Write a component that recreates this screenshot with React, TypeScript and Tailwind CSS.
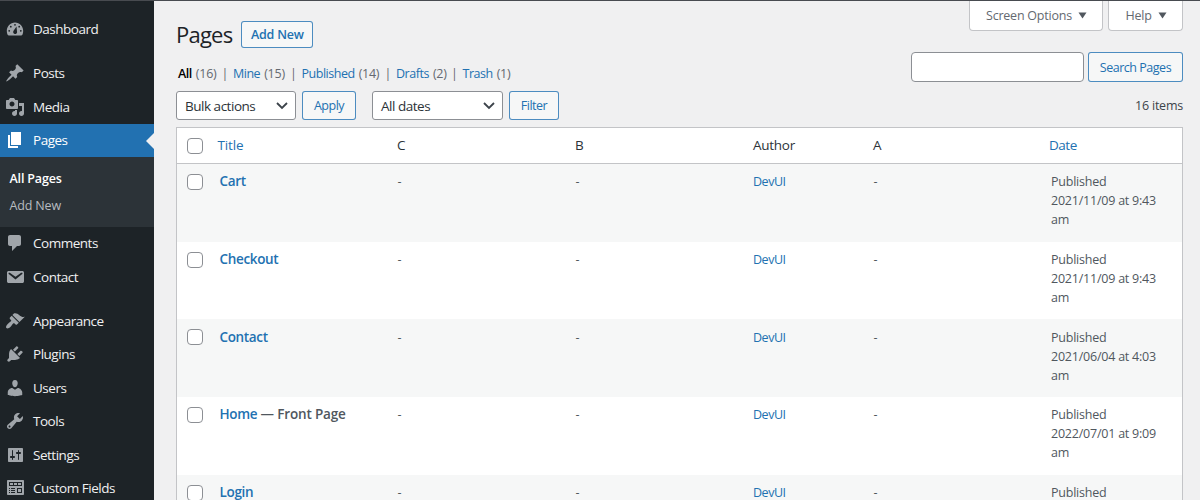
import React from "react";

const paths = {
  pin: "M10.44 3.02l1.82-1.82 6.36 6.35-1.83 1.82c-1.05-.68-2.48-.57-3.41.36l-.75.75c-.92.93-1.04 2.35-.35 3.41l-1.83 1.82-2.41-2.41-2.8 2.79c-.42.42-3.38 2.71-3.8 2.29s1.86-3.39 2.28-3.81l2.79-2.79L4.1 9.36l1.83-1.82c1.05.69 2.48.57 3.4-.36l.75-.75c.93-.92 1.05-2.35.36-3.41z",
  media:
    "M13 11V4c0-.55-.45-1-1-1h-1.67L9 1H5L3.67 3H2c-.55 0-1 .45-1 1v7c0 .55.45 1 1 1h10c.55 0 1-.45 1-1zM7 4.5c1.38 0 2.5 1.12 2.5 2.5S8.38 9.5 7 9.5 4.5 8.38 4.5 7 5.62 4.5 7 4.5zM14 6h5v10.5c0 1.38-1.12 2.5-2.5 2.5S14 17.88 14 16.5s1.12-2.5 2.5-2.5c.17 0 .34.02.5.05V9h-3V6zm-4 8.05V13h2v3.5c0 1.38-1.12 2.5-2.5 2.5S7 17.88 7 16.5 8.12 14 9.5 14c.17 0 .34.02.5.05z",
  page: "M6 15V2h10v13H6zm-1 1h8v2H3V5h2v11z",
  comment: "M5 2h9c1.1 0 2 .9 2 2v7c0 1.1-.9 2-2 2h-2l-5 5v-5H5c-1.1 0-2-.9-2-2V4c0-1.1.9-2 2-2z",
  mail: "M3.87 4h13.25C18.37 4 19 4.59 19 5.79v8.42c0 1.19-.63 1.79-1.88 1.79H3.87c-1.25 0-1.88-.6-1.88-1.79V5.79c0-1.2.63-1.79 1.88-1.79zm6.62 8.6l6.74-5.53c.24-.2.43-.66.13-1.07-.29-.41-.82-.42-1.17-.17l-5.7 3.86L4.8 5.83c-.35-.25-.88-.24-1.17.17-.3.41-.11.87.13 1.07z",
  brush:
    "M14.48 11.06L7.41 3.99l1.5-1.5c.5-.56 2.3-.47 3.51.32 1.21.8 1.43 1.28 2.91 2.1 1.18.64 2.45 1.26 4.45.85zm-.71.71L6.7 4.7 4.93 6.47c-.39.39-.39 1.02 0 1.41l1.06 1.06c.39.39.39 1.03 0 1.42-.6.6-1.43 1.11-2.21 1.69-.35.26-.7.53-1.01.84C1.43 14.23.4 16.08 1.4 17.07c.99 1 2.84-.03 4.18-1.36.31-.31.58-.66.85-1.02.57-.78 1.08-1.61 1.69-2.21.39-.39 1.02-.39 1.41 0l1.06 1.06c.39.39 1.02.39 1.41 0z",
  plug: "M13.11 4.36L9.87 7.6 8 5.73l3.24-3.24c.35-.34 1.05-.2 1.56.32.52.51.66 1.21.31 1.55zm-8 1.77l.91-1.12 9.01 9.01-1.19.84c-.71.71-2.63 1.16-3.82 1.16H6.14L4.9 17.26c-.59.59-1.54.59-2.12 0-.59-.58-.59-1.53 0-2.12l1.24-1.24v-3.88c0-1.13.4-3.19 1.09-3.89zm7.26 3.97l3.24-3.24c.34-.35 1.04-.21 1.55.31.52.51.66 1.21.31 1.55l-3.24 3.25z",
  user: "M10 9.25c-2.27 0-2.73-3.44-2.73-3.44C7 4.02 7.82 2 9.97 2c2.16 0 2.98 2.02 2.71 3.81 0 0-.41 3.44-2.68 3.44zm0 2.57L12.72 10c2.39 0 4.52 2.33 4.52 4.53v2.49s-3.65 1.13-7.24 1.13c-3.65 0-7.24-1.13-7.24-1.13v-2.49c0-2.25 1.94-4.48 4.47-4.48z",
  wrench:
    "M16.68 9.77c-1.34 1.34-3.3 1.67-4.95.99l-5.41 6.52c-.99.99-2.59.99-3.58 0s-.99-2.59 0-3.57l6.52-5.42c-.68-1.65-.35-3.61.99-4.95 1.28-1.28 3.12-1.62 4.72-1.06l-2.89 2.89 2.82 2.82 2.86-2.87c.53 1.58.18 3.39-1.08 4.65zM3.81 16.21c.4.39 1.04.39 1.43 0 .4-.4.4-1.04 0-1.43-.39-.4-1.03-.4-1.43 0-.39.39-.39 1.03 0 1.43z",
  sliders:
    "M18 16V4c0-.55-.45-1-1-1H4c-.55 0-1 .45-1 1v12c0 .55.45 1 1 1h13c.55 0 1-.45 1-1zM8 11h1c.55 0 1 .45 1 1s-.45 1-1 1H8v1.5c0 .28-.22.5-.5.5s-.5-.22-.5-.5V13H6c-.55 0-1-.45-1-1s.45-1 1-1h1V5.5c0-.28.22-.5.5-.5s.5.22.5.5V11zm5-2h-1c-.55 0-1-.45-1-1s.45-1 1-1h1V5.5c0-.28.22-.5.5-.5s.5.22.5.5V7h1c.55 0 1 .45 1 1s-.45 1-1 1h-1v5.5c0 .28-.22.5-.5.5s-.5-.22-.5-.5V9z",
  gauge:
    "M3.900 16.500c-.6 0-1-.3-1.300-.8C2.100 14.700 1.800 13.500 1.800 12.100 1.800 7.300 5.400 3.500 10 3.500s8.200 3.800 8.200 8.600c0 1.300-.3 2.500-.8 3.600-.3.500-.7.800-1.300.8zM10 4.900a.9.9 0 100 1.800.9.900 0 000-1.800zM5.800 6.800a.9.9 0 100 1.800.9.900 0 000-1.800zM14.200 6.800a.9.9 0 100 1.800.9.900 0 000-1.800zM4.200 10.900a.9.9 0 100 1.800.9.900 0 000-1.800zM15.800 10.900a.9.9 0 100 1.800.9.900 0 000-1.800zM11.500 7.500L8.400 12.100C7.700 13.600 8.600 15 10 15s2.400-1.200 2-2.600z",
  fields:
    "M19 16V3c0-.55-.45-1-1-1H3c-.55 0-1 .45-1 1v13c0 .55.45 1 1 1h15c.55 0 1-.45 1-1zM4 4h13v4H4V4zm1 1v2h3V5H5zm4 0v2h3V5H9zm4 0v2h3V5h-3zM4 10h1v1H4zM6 10h4v1H6zM12 10h5v5h-5zM4 12h1v1H4zM6 12h4v1H6zM4 14h1v1H4zM6 14h4v1H6zM13 11v3h3v-3z",
};

function MenuItem({ icon, label, active = false }: { icon: keyof typeof paths; label: string; active?: boolean }) {
  return (
    <a
      className={
        active
          ? "relative flex h-[33.5px] shrink-0 items-center bg-[#2271b1] text-white"
          : "flex h-[33.5px] shrink-0 items-center text-[#f0f0f1]"
      }
    >
      <svg
        viewBox="0 0 20 20"
        fillRule="evenodd"
        className={active ? "ml-[5px] mr-[8px] h-5 w-5 fill-white" : "ml-[5px] mr-[8px] h-5 w-5 fill-[#a0a5aa]"}
      >
        <path d={paths[icon]} />
      </svg>
      <span className="pt-[0.5px] text-[13.5px]">{label}</span>
      {active && (
        <span className="absolute right-0 top-[9px] border-y-8 border-r-8 border-y-transparent border-r-[#f0f0f1]" />
      )}
    </a>
  );
}

function Sidebar() {
  return (
    <nav className="flex w-[154px] shrink-0 flex-col overflow-hidden bg-[#1d2327] pt-[11px]">
      <MenuItem icon="gauge" label="Dashboard" />
      <div className="h-[11px] shrink-0" />
      <MenuItem icon="pin" label="Posts" />
      <MenuItem icon="media" label="Media" />
      <MenuItem icon="page" label="Pages" active />
      <div className="flex h-[69.5px] shrink-0 flex-col bg-[#2c3338] pl-[9.5px] pt-[8px] text-[12.5px] leading-[27px] tracking-[-0.013em]">
        <a className="font-semibold text-white">All Pages</a>
        <a className="text-[#b8bcc0]">Add New</a>
      </div>
      <MenuItem icon="comment" label="Comments" />
      <MenuItem icon="mail" label="Contact" />
      <div className="h-[10.5px] shrink-0" />
      <MenuItem icon="brush" label="Appearance" />
      <MenuItem icon="plug" label="Plugins" />
      <MenuItem icon="user" label="Users" />
      <MenuItem icon="wrench" label="Tools" />
      <MenuItem icon="sliders" label="Settings" />
      <MenuItem icon="fields" label="Custom Fields" />
    </nav>
  );
}

const views = [
  { label: "All", count: 16, width: "w-[55px]" },
  { label: "Mine", count: 15, width: "w-[68.5px]" },
  { label: "Published", count: 14, width: "w-[94.5px]" },
  { label: "Drafts", count: 2, width: "w-[66.5px]" },
  { label: "Trash", count: 1, width: "w-[60px]" },
];

function Button({ label, className }: { label: string; className: string }) {
  return (
    <button
      className={`flex shrink-0 items-center justify-center rounded-[3px] border border-[#2271b1]/80 bg-[#f6f7f7] pt-[2px] text-[12.5px] text-[#2271b1] ${className}`}
    >
      {label}
    </button>
  );
}

function Select({ label, className }: { label: string; className: string }) {
  return (
    <div
      className={`flex h-[29px] shrink-0 items-center justify-between rounded-[3px] border border-[#8c8f94] bg-white pl-2 pr-[7px] text-[13.5px] text-[#2c3338] ${className}`}
    >
      <span className="pt-px">{label}</span>
      <svg viewBox="0 0 12 8" className="h-2 w-3 fill-none stroke-[#3c434a] stroke-[1.8]">
        <path d="M1 1l5 5 5-5" />
      </svg>
    </div>
  );
}

function ScreenTab({ label, className }: { label: string; className: string }) {
  return (
    <button
      className={`flex h-[30px] items-center justify-center gap-[6px] rounded-b-[4px] border border-t-0 border-[#c3c4c7] bg-white text-[12.5px] tracking-[-0.018em] text-[#646970] ${className}`}
    >
      <span className="pl-px pt-[2px]">{label}</span>
      <svg viewBox="0 0 9 7" className="h-[7px] w-[9px] fill-[#50575e]">
        <path d="M0.500 0.500h8L4.500 6.500z" />
      </svg>
    </button>
  );
}

function Checkbox() {
  return <span className="block h-4 w-4 rounded-[4px] border border-[#8c8f94] bg-white" />;
}

const rows = [
  { title: "Cart", day: "2021/11/09", time: "9:43" },
  { title: "Checkout", day: "2021/11/09", time: "9:43" },
  { title: "Contact", day: "2021/06/04", time: "4:03" },
  { title: "Home", state: "Front Page", day: "2022/07/01", time: "9:09" },
  { title: "Login", day: "2022/07/01", time: "9:09" },
];

const columns = "grid grid-cols-[42px_178px_178px_178px_120px_176px_1fr]";

function PagesTable() {
  return (
    <section className="mt-[7px] h-[500px] w-[1007px] border border-[#c3c4c7] bg-white">
      <div className={`${columns} h-[36px] items-center border-b border-[#c3c4c7] text-[13.5px] text-[#2c3338]`}>
        <div className="pl-[10px]">
          <Checkbox />
        </div>
        <div className="-ml-[1.5px] tracking-[-0.01em] text-[#2271b1]">Title</div>
        <div>C</div>
        <div>B</div>
        <div className="tracking-[-0.02em]">Author</div>
        <div>A</div>
        <div className="text-[#2271b1]">Date</div>
      </div>
      {rows.map((row, i) => (
        <div
          key={row.title}
          className={`${columns} h-[77.7px] pt-[8.4px] text-[12.5px] leading-[19px] text-[#50575e] ${
            i % 2 === 0 ? "bg-[#f6f7f7]" : "bg-white"
          }`}
        >
          <div className="pl-[10px] pt-[1.5px]">
            <Checkbox />
          </div>
          <div className="pl-[0.5px] text-[13.5px] font-semibold tracking-[-0.025em]">
            <a className="text-[#2271b1]">{row.title}</a>
            {row.state && <span className="tracking-[-0.012em]"> — {row.state}</span>}
          </div>
          <div className="pl-[0.5px]">-</div>
          <div className="pl-[0.5px]">-</div>
          <div className="text-[#2271b1]">DevUI</div>
          <div className="pl-[0.5px]">-</div>
          <div className="pl-[2px] tracking-[-0.018em]">
            Published
            <br />
            {row.day} at {row.time}
            <br />
            am
          </div>
        </div>
      ))}
    </section>
  );
}

export default function App() {
  return (
    <div className="flex h-[500px] w-[1200px] flex-col overflow-hidden bg-[#f0f0f1] font-['Open_Sans',sans-serif] tracking-[-0.03em]">
      <div className="h-px shrink-0 bg-[#484b50]" />
      <div className="flex min-h-0 flex-1">
        <Sidebar />
        <main className="flex w-[1046px] flex-col pl-[22px]">
          <div className="flex h-[51px] shrink-0">
            <h1 className="pt-[17px] text-[22px] leading-[32px] tracking-[-0.035em] text-[#1d2327]">Pages</h1>
            <Button label="Add New" className="ml-[9px] mt-[20px] h-[27px] w-[72px] font-semibold tracking-[-0.015em]" />
            <div className="ml-auto mr-[17px] flex gap-[5px]">
              <ScreenTab label="Screen Options" className="w-[134px]" />
              <ScreenTab label="Help" className="w-[75px]" />
            </div>
          </div>
          <div className="flex h-[39px] shrink-0 pr-[17px]">
            <div className="flex pl-[2px] pt-[13px] text-[12.5px] leading-[18px] text-[#646970]">
              {views.map((view, i) => (
                <div key={view.label} className={`flex ${view.width}`}>
                  <a className={i === 0 ? "font-semibold text-black" : "text-[#2271b1]"}>{view.label}</a>
                  <span className="ml-1 tracking-[-0.02em]">({view.count})</span>
                  {i < views.length - 1 && <span className="ml-auto mr-[5px]">|</span>}
                </div>
              ))}
            </div>
            <div className="ml-auto h-[30px] w-[173px] rounded-[4px] border border-[#8c8f94] bg-white" />
            <Button label="Search Pages" className="ml-[4px] h-[30px] w-[95px]" />
          </div>
          <div className="flex h-[29px] shrink-0 items-center pr-[17px]">
            <Select label="Bulk actions" className="w-[120px]" />
            <Button label="Apply" className="ml-[6px] h-[29px] w-[54px]" />
            <Select label="All dates" className="ml-[16px] w-[131px]" />
            <Button label="Filter" className="ml-[6px] h-[29px] w-[50px]" />
            <span className="ml-auto pt-px text-[12.5px] tracking-[-0.018em] text-[#3c434a]">16 items</span>
          </div>
          <PagesTable />
        </main>
      </div>
    </div>
  );
}
